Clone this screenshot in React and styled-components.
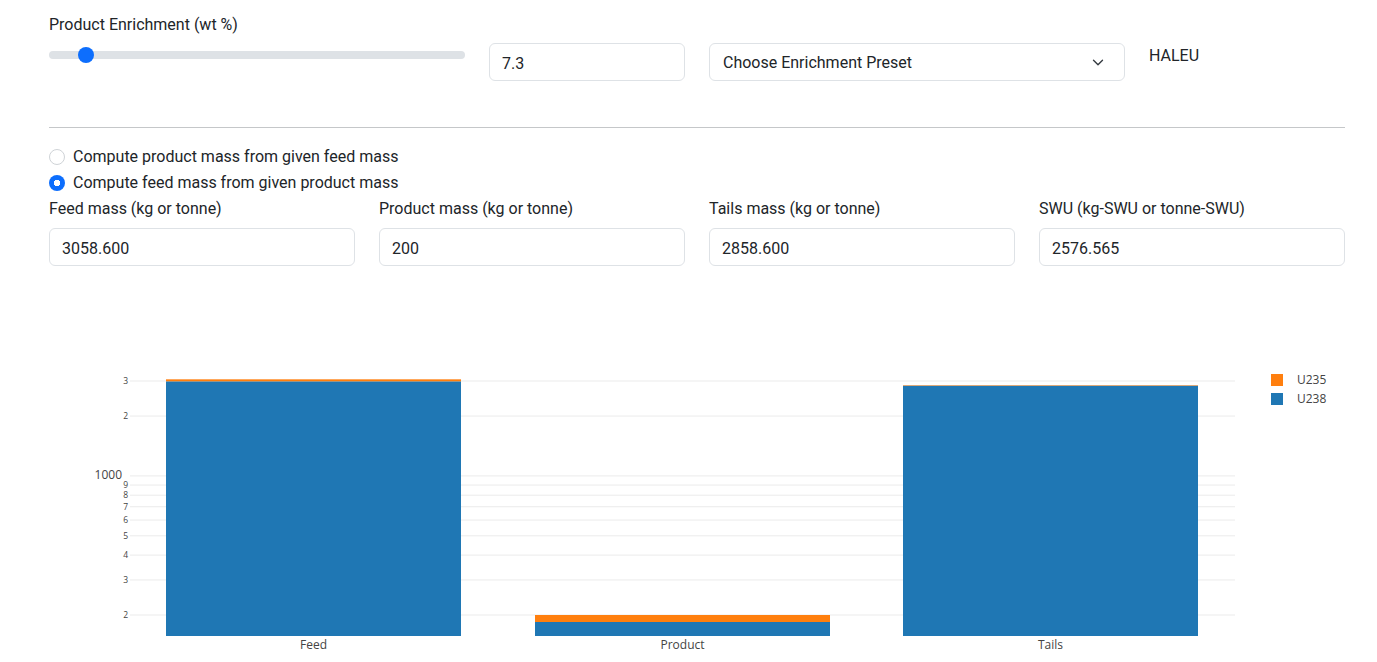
import styled, { createGlobalStyle } from 'styled-components'

const GlobalStyle = createGlobalStyle`
  body {
    margin: 0;
    background: #fff;
    color: #212529;
    font-family: Roboto, "Liberation Sans", sans-serif;
    font-size: 16px;
    line-height: 24px;
  }
  * { box-sizing: border-box; }
`

const Page = styled.div`
  padding: 11px 32px 0 49px;
`

const Label = styled.div`
  padding-top: ${p => p.$pt || 0}px;
  margin-bottom: ${p => p.$mb || 8}px;
`

const Row = styled.div`
  display: grid;
  grid-template-columns: ${p => p.$cols};
  column-gap: 24px;
  align-items: start;
`

const Range = styled.input`
  appearance: none;
  -webkit-appearance: none;
  display: block;
  width: 100%;
  height: 24px;
  margin: 0;
  padding: 0;
  background: transparent;

  &::-webkit-slider-runnable-track {
    height: 8px;
    border-radius: 16px;
    background: #dee2e6;
  }

  &::-webkit-slider-thumb {
    -webkit-appearance: none;
    width: 16px;
    height: 16px;
    margin-top: -4px;
    border-radius: 50%;
    background: #0d6efd;
    border: 0;
  }
`

const TextInput = styled.input`
  display: block;
  width: 100%;
  height: 38px;
  padding: 7px 12px 5px;
  font: inherit;
  color: #212529;
  border: 1px solid #dee2e6;
  border-radius: 6px;
  background: #fff;
  outline: none;
`

const Select = styled.div`
  display: flex;
  align-items: center;
  justify-content: space-between;
  height: 38px;
  padding: 7px 20px 5px 13px;
  border: 1px solid #dee2e6;
  border-radius: 6px;

  svg {
    width: 12px;
    height: 9px;
    margin-top: -2px;
  }
`

const Note = styled.div`
  padding-top: 1px;
`

const Rule = styled.hr`
  margin: 46px 0 17px;
  border: 0;
  border-top: 1px solid #c5c7c9;
`

const Check = styled.label`
  display: flex;
  align-items: center;
  gap: 8px;
  min-height: 24px;
  margin-bottom: 2px;
`

const Radio = styled.span`
  width: 16px;
  height: 16px;
  border-radius: 50%;
  flex: none;
  border: ${p => (p.$on ? '0' : '1px solid #cfd3d7')};
  background: ${p => (p.$on ? 'radial-gradient(circle, #fff 0 3px, #0d6efd 3.5px)' : '#fff')};
`

const Field = styled.div`
  display: flex;
  flex-direction: column;
`

const Chart = styled.svg`
  display: block;
  margin-top: 24px;
  overflow: visible;
  font-family: "Open Sans", "Liberation Sans", sans-serif;
`

const BLUE = '#1f77b4'
const ORANGE = '#ff7f0e'

// log axis: 3000 -> 91, 200 -> 325 (svg coords)
const K = 234 / Math.log10(15)
const yOf = v => 91 - (Math.log10(v) - Math.log10(3000)) * K
const BOTTOM = 346

const ticks = [
  { v: 3000, t: '3' },
  { v: 2000, t: '2' },
  { v: 1000, t: '1000', big: true },
  { v: 900, t: '9' },
  { v: 800, t: '8' },
  { v: 700, t: '7' },
  { v: 600, t: '6' },
  { v: 500, t: '5' },
  { v: 400, t: '4' },
  { v: 300, t: '3' },
  { v: 200, t: '2' },
]

// orange cap height in px as plotted in the original
const bars = [
  { name: 'Feed', x: 117, total: 3058.6, cap: 2 },
  { name: 'Product', x: 486, total: 200, cap: 7 },
  { name: 'Tails', x: 854, total: 2858.6, cap: 0.5 },
]

const MassChart = () => (
  <Chart width='1296' height='372'>
    {ticks.map(tk => (
      <g key={tk.v}>
        <line x1='81' x2='1186' y1={yOf(tk.v)} y2={yOf(tk.v)} stroke='#ebebeb' strokeWidth='1' />
        <text
          x={tk.big ? 73 : 79}
          y={yOf(tk.v) + 3}
          textAnchor='end'
          fontSize={tk.big ? 12 : 8.5}
          fill='#444'
        >
          {tk.t}
        </text>
      </g>
    ))}
    {bars.map(b => {
      const top = yOf(b.total)
      return (
        <g key={b.name}>
          <rect x={b.x} width='295' y={top + b.cap} height={BOTTOM - top - b.cap} fill={BLUE} />
          <rect x={b.x} width='295' y={top} height={b.cap} fill={ORANGE} />
          <text x={b.x + 147.5} y='359' textAnchor='middle' fontSize='12' fill='#444'>{b.name}</text>
        </g>
      )
    })}
    <rect x='1222' y='84' width='12' height='12' fill={ORANGE} />
    <text x='1248' y='94' fontSize='12' fill='#444'>U235</text>
    <rect x='1222' y='103' width='12' height='12' fill={BLUE} />
    <text x='1248' y='113' fontSize='12' fill='#444'>U238</text>
  </Chart>
)

const fields = [
  { label: 'Feed mass (kg or tonne)', value: '3058.600' },
  { label: 'Product mass (kg or tonne)', value: '200' },
  { label: 'Tails mass (kg or tonne)', value: '2858.600' },
  { label: 'SWU (kg-SWU or tonne-SWU)', value: '2576.565' },
]

const App = () => (
  <Page>
    <GlobalStyle />
    <Label $pt={2} $mb={6}>Product Enrichment (wt %)</Label>
    <Row $cols='416px 196px 416px 1fr'>
      <Range type='range' min='0' max='100' step='0.1' defaultValue='7.3' />
      <TextInput defaultValue='7.3' />
      <Select>
        <span>Choose Enrichment Preset</span>
        <svg viewBox='0 0 16 12'>
          <path d='M2 3l6 6 6-6' fill='none' stroke='#343a40' strokeWidth='1.8' strokeLinecap='round' strokeLinejoin='round' />
        </svg>
      </Select>
      <Note>HALEU</Note>
    </Row>
    <Rule />
    <Check><Radio />Compute product mass from given feed mass</Check>
    <Check><Radio $on />Compute feed mass from given product mass</Check>
    <Row $cols='repeat(4, 1fr)'>
      {fields.map(f => (
        <Field key={f.label}>
          <Label $mb={7}>{f.label}</Label>
          <TextInput defaultValue={f.value} />
        </Field>
      ))}
    </Row>
    <MassChart />
  </Page>
)

export default App
